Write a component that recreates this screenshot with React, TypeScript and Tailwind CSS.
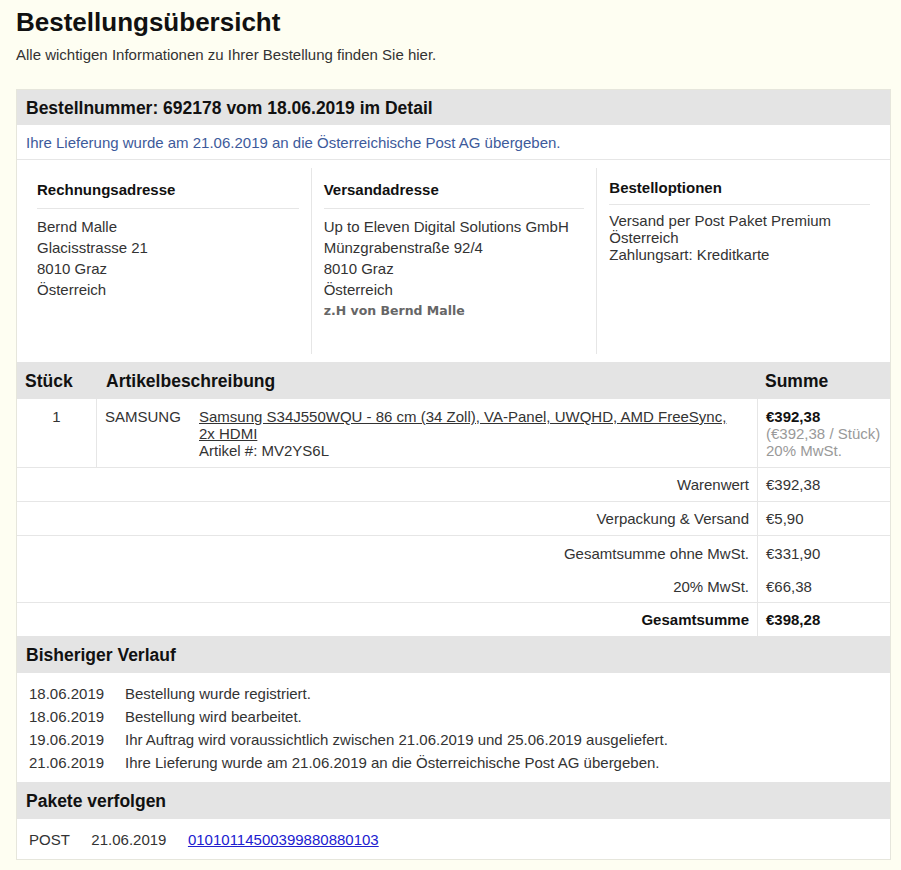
import React from "react";

const font = { fontFamily: '"Liberation Sans", Arial, sans-serif' };

function SectionHeader({ children }: { children: React.ReactNode }) {
  return (
    <div className="h-[37px] bg-[#e4e4e4] px-[9px] pt-[2px] flex items-center text-[17.5px] font-bold text-[#111]">
      {children}
    </div>
  );
}

export default function App() {
  const history = [
    ["18.06.2019", "Bestellung wurde registriert."],
    ["18.06.2019", "Bestellung wird bearbeitet."],
    ["19.06.2019", "Ihr Auftrag wird voraussichtlich zwischen 21.06.2019 und 25.06.2019 ausgeliefert."],
    ["21.06.2019", "Ihre Lieferung wurde am 21.06.2019 an die Österreichische Post AG übergeben."],
  ];
  const summary: [string, string, boolean, boolean, string][] = [
    ["Warenwert", "€392,38", false, true, "h-[34px]"],
    ["Verpackung & Versand", "€5,90", false, true, "h-[34px]"],
    ["Gesamtsumme ohne MwSt.", "€331,90", false, false, "h-[34px]"],
    ["20% MwSt.", "€66,38", false, true, "h-[33px]"],
    ["Gesamtsumme", "€398,28", true, false, "h-[33px]"],
  ];
  return (
    <div className="min-h-[870px] bg-[#fefef2] px-4 text-[15px] text-[#333]" style={font}>
      <h1 className="pt-[7px] text-[26px] leading-[30px] font-bold text-[#111]">Bestellungsübersicht</h1>
      <p className="mt-[8px] leading-[20px]">Alle wichtigen Informationen zu Ihrer Bestellung finden Sie hier.</p>

      <div className="mt-[24px] w-[875px] border border-[#e6e6dc] bg-white">
        <div className="h-[35px] bg-[#e4e4e4] px-[9px] pt-[2px] flex items-center text-[17.5px] font-bold text-[#111]">
          Bestellnummer: 692178 vom 18.06.2019 im Detail
        </div>
        <div className="h-[35px] border-b border-[#e6e6e6] px-[9px] pt-[2px] flex items-center text-[#3d5a9b]">
          Ihre Lieferung wurde am 21.06.2019 an die Österreichische Post AG übergeben.
        </div>

        <div className="grid grid-cols-3 p-[8px]">
          <div className="h-[186px] px-[12px] pt-[13px]">
            <div className="leading-[18px] font-bold text-[#111] pb-[9px] border-b border-[#e6e6e6]">Rechnungsadresse</div>
            <div className="mt-[7px] leading-[21px]">
              <div>Bernd Malle</div>
              <div>Glacisstrasse 21</div>
              <div>8010 Graz</div>
              <div>Österreich</div>
            </div>
          </div>
          <div className="h-[186px] px-[12px] pt-[13px] border-l border-[#e6e6e6]">
            <div className="leading-[18px] font-bold text-[#111] pb-[9px] border-b border-[#e6e6e6]">Versandadresse</div>
            <div className="mt-[7px] leading-[21px]">
              <div>Up to Eleven Digital Solutions GmbH</div>
              <div>Münzgrabenstraße 92/4</div>
              <div>8010 Graz</div>
              <div>Österreich</div>
              <div
                className="text-[12.5px] font-bold text-[#666]"
                style={{ fontFamily: '"DejaVu Sans", Verdana, sans-serif' }}
              >
                z.H von Bernd Malle
              </div>
            </div>
          </div>
          <div className="h-[186px] px-[12px] pt-[11px] border-l border-[#e6e6e6]">
            <div className="leading-[18px] font-bold text-[#111] pb-[7px] border-b border-[#e6e6e6]">Bestelloptionen</div>
            <div className="mt-[7px] leading-[17px]">
              <div>Versand per Post Paket Premium Österreich</div>
              <div>Zahlungsart: Kreditkarte</div>
            </div>
          </div>
        </div>

        <div className="grid grid-cols-[80px_1fr_133px] h-[37px] pt-[2px] bg-[#e4e4e4] text-[17.5px] font-bold text-[#111] items-center">
          <div className="px-[8px]">Stück</div>
          <div className="px-[9px]">Artikelbeschreibung</div>
          <div className="px-[8px]">Summe</div>
        </div>

        <div className="grid grid-cols-[80px_1fr_133px] border-b border-[#e6e6e6] leading-[17px]">
          <div className="pt-[9px] pb-[8px] text-center border-r border-[#e6e6e6]">1</div>
          <div className="pt-[9px] pb-[8px] pl-[8px] pr-[8px] flex">
            <div className="w-[94px] shrink-0">SAMSUNG</div>
            <div>
              <a className="underline text-[#333] decoration-[#333]">
                Samsung S34J550WQU - 86 cm (34 Zoll), VA-Panel, UWQHD, AMD FreeSync,
                <br />
                2x HDMI
              </a>
              <div>Artikel #: MV2YS6L</div>
            </div>
          </div>
          <div className="pt-[9px] pb-[8px] px-[8px] border-l border-[#e6e6e6]">
            <div className="font-bold text-[#111]">€392,38</div>
            <div className="text-[#999]">(€392,38 / Stück)</div>
            <div className="text-[#999]">20% MwSt.</div>
          </div>
        </div>

        {summary.map(([label, value, bold, border, h]) => (
          <div
            key={label}
            className={`grid grid-cols-[1fr_133px] ${h} ${border ? "border-b border-[#e6e6e6]" : ""} ${bold ? "font-bold text-[#111]" : ""}`}
          >
            <div className="flex items-center justify-end px-[8px] pt-[2px]">{label}</div>
            <div className="flex items-center px-[8px] pt-[2px] border-l border-[#e6e6e6]">{value}</div>
          </div>
        ))}

        <SectionHeader>Bisheriger Verlauf</SectionHeader>
        <div className="pt-[9px] pb-[8px] px-[12px]">
          {history.map(([d, t], i) => (
            <div key={i} className="flex leading-[23px]">
              <div className="w-[96px] shrink-0">{d}</div>
              <div>{t}</div>
            </div>
          ))}
        </div>

        <SectionHeader>Pakete verfolgen</SectionHeader>
        <div className="h-[40px] px-[12px] pt-[2px] flex items-center gap-[21.5px]">
          <span>POST</span>
          <span>21.06.2019</span>
          <a className="underline text-[#2020d0]">01010114500399880880103</a>
        </div>
      </div>
    </div>
  );
}
